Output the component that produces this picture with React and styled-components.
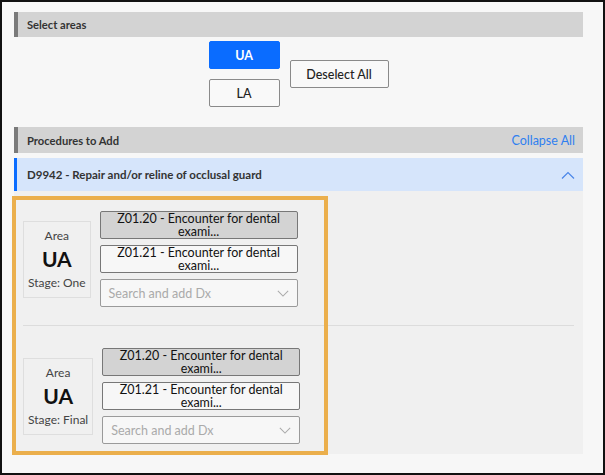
import React from 'react';
import styled, { createGlobalStyle } from 'styled-components';

const GlobalStyle = createGlobalStyle`
  html, body {
    margin: 0;
    padding: 0;
    background: #f7f7f7;
  }
  * {
    box-sizing: border-box;
  }
`;

const Frame = styled.div`
  width: 605px;
  height: 475px;
  border: 2px solid #111;
  background: #f7f7f7;
  padding: 10px 20px 0 12px;
  font-family: Lato, "Liberation Sans", sans-serif;
  color: #222;
  overflow: hidden;
`;

const SectionBar = styled.div`
  display: flex;
  align-items: center;
  justify-content: space-between;
  height: ${props => (props.tall ? 26 : 25)}px;
  background: #d3d3d3;
  border-left: 4px solid #7a7a7a;
  padding: 0 8px 0 9px;
  font-size: 11.2px;
  font-weight: 700;
  color: #333;
`;

const LinkButton = styled.button`
  border: none;
  background: none;
  padding: 0;
  font-family: inherit;
  font-size: 12.5px;
  color: #2f7ff0;
  cursor: pointer;
`;

const AreaPicker = styled.div`
  display: flex;
  justify-content: center;
  align-items: center;
  gap: 10px;
  padding: 4px 0 20px;
`;

const AreaColumn = styled.div`
  display: flex;
  flex-direction: column;
  gap: 10px;
`;

const Button = styled.button`
  height: 28px;
  width: ${props => props.width || 71}px;
  border: 1px solid ${props => (props.primary ? '#0a6cff' : '#8a8a8a')};
  border-radius: 2px;
  background: ${props => (props.primary ? '#0a6cff' : '#f9f9f9')};
  color: ${props => (props.primary ? '#fff' : '#222')};
  font-family: inherit;
  font-size: 12.5px;
  font-weight: ${props => (props.primary ? 700 : 500)};
  cursor: pointer;
`;

const ProcedureRow = styled.div`
  display: flex;
  align-items: center;
  justify-content: space-between;
  height: 33px;
  margin-top: 5px;
  background: #d6e5fb;
  border-left: 3px solid #0a6cff;
  padding: 0 8px 0 10px;
  font-size: 11.5px;
  font-weight: 700;
  color: #333;
`;

const Body = styled.div`
  position: relative;
  background: #f0f0f0;
  padding: 0 9px 10px;
`;

const Highlight = styled.div`
  position: absolute;
  left: -2px;
  top: 5px;
  width: 316px;
  height: 259px;
  border: 4px solid #ebaf4c;
  pointer-events: none;
`;

const Card = styled.div`
  display: flex;
  align-items: center;
  gap: 9px;
  padding: ${props => (props.first ? '20px 0 18px' : '22px 0 0')};
  border-bottom: ${props => (props.first ? '1px solid #dcdcdc' : 'none')};
`;

const AreaBox = styled.div`
  display: flex;
  flex-direction: column;
  align-items: center;
  justify-content: center;
  height: 77px;
  padding: 0 4px;
  border: 1px solid #dedede;
  color: #444;
  font-size: 12px;
`;

const AreaCode = styled.div`
  font-size: 21px;
  font-weight: 700;
  color: #111;
  margin: 3px 0 4px;
`;

const DxColumn = styled.div`
  display: flex;
  flex-direction: column;
  gap: 6px;
  width: 198px;
`;

const DxChip = styled.div`
  height: 28px;
  padding: 0 10px;
  border: 1px solid #777;
  border-radius: 2px;
  background: ${props => (props.active ? '#d3d3d3' : '#f7f7f7')};
  color: #111;
  font-size: 12.5px;
  line-height: 13px;
  text-align: center;
`;

const DxSelect = styled.div`
  display: flex;
  align-items: center;
  justify-content: space-between;
  height: 28px;
  padding: 0 8px;
  border: 1px solid #9a9a9a;
  border-radius: 2px;
  background: #f7f7f7;
  color: #aaa;
  font-size: 12.5px;
`;

const Chevron = ({ up, color, size = 14 }) => (
  <svg width={size} height={size / 2 + 1} viewBox="0 0 14 8" fill="none">
    <path
      d={up ? 'M1 7.5L7 1.5L13 7.5' : 'M1 1L7 7L13 1'}
      stroke={color}
      strokeWidth="1.2"
    />
  </svg>
);

const cards = [
  { stage: 'One' },
  { stage: 'Final' },
];

const diagnoses = [
  { code: 'Z01.20', active: true },
  { code: 'Z01.21', active: false },
];

export default function App() {
  return (
    <>
      <GlobalStyle />
      <Frame>
        <SectionBar>Select areas</SectionBar>
        <AreaPicker>
          <AreaColumn>
            <Button primary>UA</Button>
            <Button>LA</Button>
          </AreaColumn>
          <Button width={99}>Deselect All</Button>
        </AreaPicker>

        <SectionBar tall>
          Procedures to Add
          <LinkButton>Collapse All</LinkButton>
        </SectionBar>
        <ProcedureRow>
          D9942 - Repair and/or reline of occlusal guard
          <Chevron up color="#4a86e8" />
        </ProcedureRow>

        <Body>
          {cards.map((card, i) => (
            <Card key={card.stage} first={i === 0}>
              <AreaBox>
                <div>Area</div>
                <AreaCode>UA</AreaCode>
                <div>Stage: {card.stage}</div>
              </AreaBox>
              <DxColumn>
                {diagnoses.map(dx => (
                  <DxChip key={dx.code} active={dx.active}>
                    {dx.code} - Encounter for dental exami...
                  </DxChip>
                ))}
                <DxSelect>
                  Search and add Dx
                  <Chevron color="#aaa" size={12} />
                </DxSelect>
              </DxColumn>
            </Card>
          ))}
          <Highlight />
        </Body>
      </Frame>
    </>
  );
}
